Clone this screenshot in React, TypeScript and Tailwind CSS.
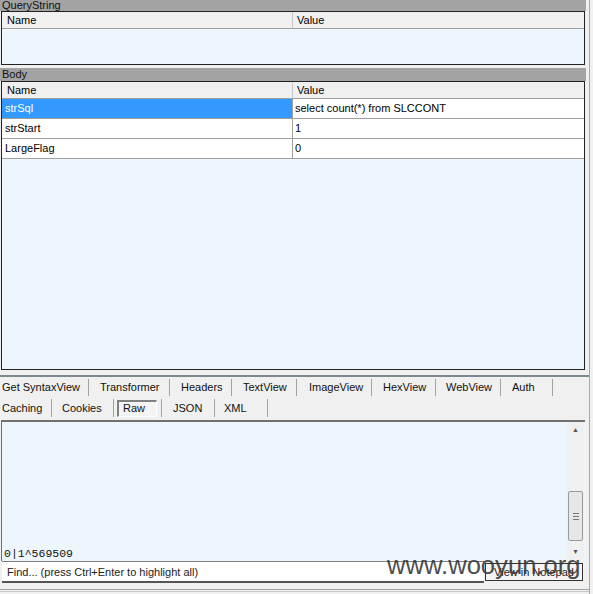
import React from 'react';

const ui = { fontFamily: '"Liberation Sans", Arial, sans-serif' };
const mono = { fontFamily: '"Liberation Mono", "DejaVu Sans Mono", monospace' };

function HeaderRow() {
  return (
    <div className="flex h-[17px] bg-[#f0f0f0] border-b border-[#a0a0a0] text-[11px] leading-[16px] text-black">
      <div className="w-[291px] pl-[5px] border-r border-[#c8c8c8]">Name</div>
      <div className="flex-1 pl-[4px]">Value</div>
    </div>
  );
}

function Row({ name, value, selected }: { name: string; value: string; selected?: boolean }) {
  return (
    <div className="flex h-[20px] border-b border-[#a0a0a0] bg-white text-[11px] leading-[19px] text-black">
      <div
        className={
          selected
            ? 'w-[291px] pl-[3px] border-r border-[#a0a0a0] bg-[#3399ff] text-white'
            : 'w-[291px] pl-[3px] border-r border-[#a0a0a0]'
        }
      >
        {name}
      </div>
      <div className="flex-1 pl-[2px]">{value}</div>
    </div>
  );
}

// widths taken from the separator positions
const tabs1 = [
  { label: 'Get SyntaxView', w: 89, pl: 2 },
  { label: 'Transformer', w: 81, pl: 11 },
  { label: 'Headers', w: 62, pl: 11 },
  { label: 'TextView', w: 65, pl: 11 },
  { label: 'ImageView', w: 75, pl: 12 },
  { label: 'HexView', w: 64, pl: 11 },
  { label: 'WebView', w: 65, pl: 10 },
  { label: 'Auth', w: 52, pl: 11 },
];

const tabs2 = [
  { label: 'Caching', w: 52, pl: 2 },
  { label: 'Cookies', w: 62, pl: 10 },
  { label: 'Raw', w: 48, pl: 3, active: true },
  { label: 'JSON', w: 53, pl: 11 },
  { label: 'XML', w: 53, pl: 9 },
];

export default function App() {
  return (
    <div className="relative w-[593px] h-[594px] overflow-hidden bg-[#f0f0f0] text-black" style={ui}>
      <div className="flex h-full">
        <div className="w-[589px] flex flex-col">
          {/* QueryString */}
          <div className="w-[586px] h-[11px] bg-[#a3a3a3] text-[11px] leading-[10px] pl-[2px] text-[#111] overflow-hidden">
            QueryString
          </div>
          <div className="ml-[1px] w-[584px] h-[54px] border border-[#222] bg-[#eef6fd] flex flex-col">
            <HeaderRow />
          </div>
          <div className="h-[3px]" />

          {/* Body */}
          <div className="w-[586px] h-[13px] bg-[#a3a3a3] text-[11px] leading-[13px] pl-[2px] text-[#111] overflow-hidden">
            Body
          </div>
          <div className="ml-[1px] w-[584px] h-[289px] border border-[#222] bg-[#eef6fd] flex flex-col">
            <HeaderRow />
            <Row name="strSql" value="select count(*) from SLCCONT" selected />
            <Row name="strStart" value="1" />
            <Row name="LargeFlag" value="0" />
          </div>

          <div className="h-[5px]" />
          <div className="h-[2px] bg-[#7c8a8e]" />

          {/* tabs */}
          <div className="flex h-[21px] items-center text-[11px] text-[#111]">
            {tabs1.map((t) => (
              <div
                key={t.label}
                className="h-[17px] flex items-center border-r border-[#a0a0a0]"
                style={{ width: t.w, paddingLeft: t.pl }}
              >
                {t.label}
              </div>
            ))}
          </div>
          <div className="flex h-[20px] items-center text-[11px] text-[#111]">
            {tabs2.map((t) => (
              <div
                key={t.label}
                className="h-[18px] flex items-center border-r border-[#a0a0a0]"
                style={{ width: t.w, paddingLeft: t.pl }}
              >
                {t.active ? (
                  <span className="w-[40px] h-[17px] pl-[4px] flex items-center border-t-2 border-l-2 border-[#808080] border-b border-r border-b-white border-r-white bg-[#f4f4f4]">
                    {t.label}
                  </span>
                ) : (
                  t.label
                )}
              </div>
            ))}
          </div>
          <div className="h-[2px]" />

          {/* raw text area */}
          <div className="ml-[1px] w-[584px] h-[141px] border-t-2 border-l border-[#707070] bg-[#eef6fd] flex">
            <div className="flex-1 flex flex-col justify-end pl-[2px] pb-[1px]">
              <div className="text-[11.5px] leading-[13px] text-[#111]" style={mono}>
                0|1^569509
              </div>
            </div>
            <div className="w-[17px] mr-[1px] bg-[#f0f0f0] flex flex-col items-center">
              <div className="h-[17px] flex items-center justify-center text-[7px] text-[#555]">▲</div>
              <div className="flex-1 w-full flex flex-col">
                <div className="h-[52px]" />
                <div className="h-[50px] mx-[1px] border border-[#9a9a9a] rounded-[2px] bg-[#e6e6e6] flex flex-col items-center justify-center gap-[2px]">
                  <div className="w-[6px] h-[1px] bg-[#777]" />
                  <div className="w-[6px] h-[1px] bg-[#777]" />
                  <div className="w-[6px] h-[1px] bg-[#777]" />
                </div>
              </div>
              <div className="h-[17px] flex items-center justify-center text-[7px] text-[#555]">▼</div>
            </div>
          </div>

          {/* find bar */}
          <div className="flex items-center h-[22px]">
            <div className="ml-[2px] w-[482px] h-[22px] border-t border-[#808080] border-b-2 border-b-[#555] bg-white text-[11px] leading-[20px] pl-[5px] text-[#222]">
              Find... (press Ctrl+Enter to highlight all)
            </div>
            <div className="ml-[1px] w-[98px] h-[18px] border border-[#333] bg-[#f4f4f4] text-[11px] leading-[16px] text-center text-[#222]">
              View in Notepad
            </div>
          </div>
          <div className="h-[6px]" />
          <div className="h-[1px] bg-[#a0a0a0]" />
          <div className="h-[1px] bg-[#c8c8c8] mt-[1px]" />
        </div>
        <div className="w-[4px] border-l border-[#a8a8a8]" />
      </div>

      {/* watermark */}
      <div className="absolute left-[387px] top-[550px] text-[25.6px] leading-[30px] text-[#3a3a3a] opacity-90 pointer-events-none">
        www.wooyun.org
      </div>
    </div>
  );
}
